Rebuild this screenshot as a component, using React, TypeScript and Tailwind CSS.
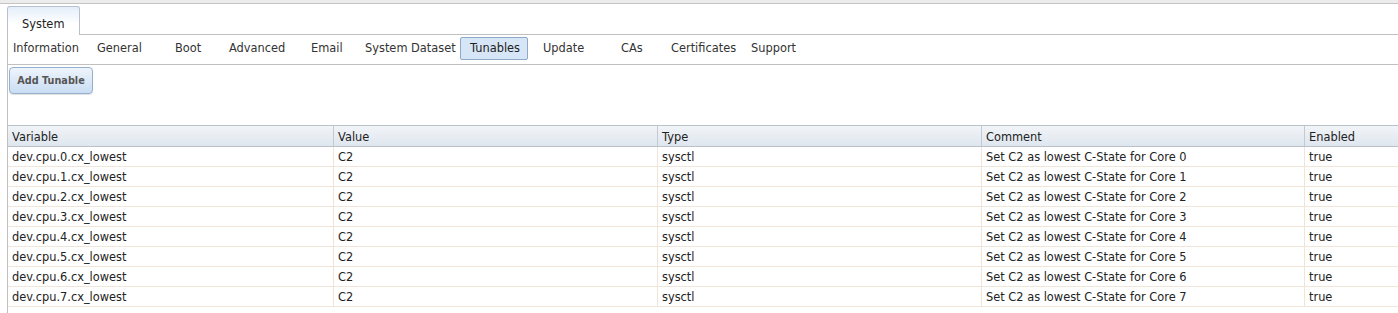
import React from "react";

const navItems: { label: string; w: number; active?: boolean }[] = [
  { label: "Information", w: 84 },
  { label: "General", w: 78 },
  { label: "Boot", w: 54 },
  { label: "Advanced", w: 82 },
  { label: "Email", w: 54 },
  { label: "System Dataset", w: 95 },
  { label: "Tunables", w: 68, active: true },
  { label: "Update", w: 78 },
  { label: "CAs", w: 50 },
  { label: "Certificates", w: 80 },
  { label: "Support", w: 80 },
];

const cols = [
  { label: "Variable", w: 325 },
  { label: "Value", w: 324 },
  { label: "Type", w: 324 },
  { label: "Comment", w: 323 },
  { label: "Enabled", w: 120 },
];

const rows = Array.from({ length: 8 }, (_, i) => [
  `dev.cpu.${i}.cx_lowest`,
  "C2",
  "sysctl",
  `Set C2 as lowest C-State for Core ${i}`,
  "true",
]);

export default function App() {
  return (
    <div
      className="w-[1398px] h-[313px] overflow-hidden bg-white text-[#222] text-[11.4px]"
      style={{ fontFamily: '"DejaVu Sans", Verdana, sans-serif' }}
    >
      <div className="h-[4px] bg-[#ececec] border-b border-[#c4c4c4]" />
      <div className="flex pl-[7px] pt-[2px]">
        <div className="w-[73px] h-[29px] border border-b-0 border-[#b7c0cc] rounded-t-[3px] bg-gradient-to-b from-[#e4eef9] to-white to-[60%] flex items-center pl-[14px] pt-[7px]">
          System
        </div>
        <div className="flex-1 border-b border-[#c0c0c0]" />
      </div>
      <div className="ml-[7px] border-l border-[#c0c0c0] h-[279px]">
        <div className="h-[30px] border-b border-[#c0c0c0] flex items-center pl-[5px] text-[#333]">
          {navItems.map((it) =>
            it.active ? (
              <div
                key={it.label}
                className="shrink-0 h-[23px] mt-[-3px] mr-[15px] border border-[#8fa9c8] rounded-[2px] bg-[#d6e6f7] flex items-center pl-[9px] pt-[2px] text-[#222]"
                style={{ width: it.w }}
              >
                {it.label}
              </div>
            ) : (
              <div
                key={it.label}
                className="shrink-0 h-[23px] mt-[-3px] pt-[2px] flex items-center whitespace-nowrap"
                style={{ width: it.w }}
              >
                {it.label}
              </div>
            )
          )}
        </div>
        <div className="pt-[2px] pl-[1px]">
          <div className="w-[84px] h-[27px] border border-[#95afcf] rounded-[4px] bg-gradient-to-b from-[#eef4fb] to-[#c9ddf3] shadow-[0_1px_1px_rgba(0,0,0,0.12)] flex items-center justify-center pt-[1px] font-bold text-[#555] text-[9.7px]">
            Add Tunable
          </div>
        </div>
        <div className="mt-[31px] overflow-hidden">
          <div className="w-[1500px]">
            <div className="flex h-[22px] border-t border-b border-[#b9c1cb] bg-gradient-to-b from-[#f1f4f8] to-[#dfe6ee]">
              {cols.map((c, i) => (
                <div
                  key={c.label}
                  className={`shrink-0 flex items-center pl-[4px] pt-[3px] ${i > 0 ? "border-l border-[#c3cad3]" : ""}`}
                  style={{ width: c.w }}
                >
                  {c.label}
                </div>
              ))}
            </div>
            {rows.map((r, ri) => (
              <div key={ri} className="flex h-[20px] border-b border-[#efe5d8]">
                {r.map((cell, ci) => (
                  <div
                    key={ci}
                    className={`shrink-0 flex items-center pl-[4px] pt-[2px] ${ci > 0 ? "border-l border-[#efe5d8]" : ""}`}
                    style={{ width: cols[ci].w }}
                  >
                    {cell}
                  </div>
                ))}
              </div>
            ))}
          </div>
        </div>
      </div>
    </div>
  );
}
